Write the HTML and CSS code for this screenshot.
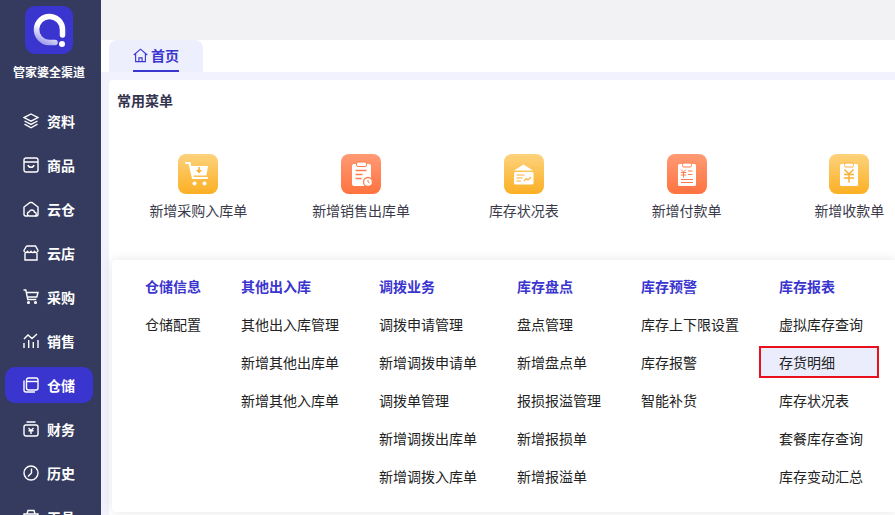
FILE: index.html
```html
<!DOCTYPE html>
<html lang="zh-CN">
<head>
  <meta charset="UTF-8">
  <title>管家婆全渠道</title>
  <link rel="stylesheet" href="styles.css">
</head>
<body>
<div class="app">

  <!-- 左侧导航 -->
  <aside class="sidebar">
    <div class="logo">
      <svg width="48" height="48" viewBox="0 0 48 48">
        <defs>
          <linearGradient id="ring" x1="0.800" y1="0" x2="0.300" y2="1">
            <stop offset="0" stop-color="#ffffff"/>
            <stop offset="0.550" stop-color="#ffffff"/>
            <stop offset="1" stop-color="#a9a6ec"/>
          </linearGradient>
        </defs>
        <path d="M30 36.500H24A13 13 0 1 1 37.500 24V29" fill="none" stroke="url(#ring)" stroke-width="5.500" stroke-linecap="round"/>
        <circle cx="37" cy="38" r="3" fill="#fff"/>
      </svg>
    </div>
    <div class="brand">管家婆全渠道</div>
    <nav class="nav">
      <a class="nav-item">
        <svg class="nav-icon" viewBox="0 0 16 16"><path d="M8 1 15 4.600 8 8.200 1 4.600ZM1.500 8 8 11.400 14.500 8M1.500 11.200 8 14.800l6.500-3.600"/></svg>
        <span>资料</span>
      </a>
      <a class="nav-item">
        <svg class="nav-icon" viewBox="0 0 16 16"><rect x="1" y="1" width="14" height="14" rx="2"/><path d="M1 5h14M5 8c.6 3 5.400 3 6 0"/></svg>
        <span>商品</span>
      </a>
      <a class="nav-item">
        <svg class="nav-icon" viewBox="0 0 16 16"><path d="M5 15H2.500A1.500 1.500 0 0 1 1 13.500V6l6-4.500h2L15 6v7.500a1.500 1.500 0 0 1-1.500 1.500H12"/><path d="M6 15a2.200 2.200 0 0 1 .3-4.300 2.800 2.800 0 0 1 5.300.6A1.900 1.900 0 0 1 12 15Z"/></svg>
        <span>云仓</span>
      </a>
      <a class="nav-item">
        <svg class="nav-icon" viewBox="0 0 16 16"><path d="M3.500 1h9L15 5.500v1M1 6.500v-1L3.500 1M1 6c1.200 2 2.500 2 3.500.5 1 1.500 2.500 1.500 3.500 0 1 1.500 2.500 1.500 3.500 0 1 1.500 2.300 1.500 3.500-.5M2 8v7h12V8"/></svg>
        <span>云店</span>
      </a>
      <a class="nav-item">
        <svg class="nav-icon" viewBox="0 0 16 16"><path d="M0.500 1h2.300l2 9.500h8.500M3.300 3.500h11.700l-1.200 4.500H4.300"/><circle cx="5.500" cy="13.500" r=".9"/><circle cx="12.500" cy="13.500" r=".9"/></svg>
        <span>采购</span>
      </a>
      <a class="nav-item">
        <svg class="nav-icon" viewBox="0 0 16 16"><path d="M1 15V10M5.700 15V7M10.300 15V9M15 15V7M1 6l4-4 4 3.500L14 1"/></svg>
        <span>销售</span>
      </a>
      <a class="nav-item active">
        <svg class="nav-icon" viewBox="0 0 16 16"><path d="M1 3.500V13a2 2 0 0 0 2 2h9"/><rect x="3.500" y="1" width="11.500" height="12" rx="2"/><path d="M3.500 4.500h11.500"/></svg>
        <span>仓储</span>
      </a>
      <a class="nav-item">
        <svg class="nav-icon" viewBox="0 0 16 16"><rect x="1" y="4" width="14" height="11" rx="2"/><path d="M3.500 1h9M5.500 7 8 9.500 10.500 7M5.500 9.800h5M8 9.500V13"/></svg>
        <span>财务</span>
      </a>
      <a class="nav-item">
        <svg class="nav-icon" viewBox="0 0 16 16"><circle cx="8" cy="8" r="7"/><path d="M8.500 3.500V8L5 11.500"/></svg>
        <span>历史</span>
      </a>
      <a class="nav-item">
        <svg class="nav-icon" viewBox="0 0 16 16"><path d="M4 5 5 1.500h6L12 5M1 5h14v9H1ZM1 9h14"/></svg>
        <span>工具</span>
      </a>
    </nav>
  </aside>

  <main class="main">
    <div class="topbar"></div>

    <div class="tabs">
      <div class="tab">
        <svg class="tab-icon" viewBox="0 0 16 16"><path d="M.8 7.500 8 1.200l7.200 6.300M2.800 6V14.500h10.400V6M6.300 14.500V10.500h3.400V14.500"/></svg>
        <span>首页</span>
      </div>
    </div>

    <section class="content">
      <h3 class="section-title">常用菜单</h3>
      <div class="quick-list">
        <div class="quick-item">
          <div class="quick-icon yellow">
            <svg viewBox="0 0 40 40" width="40" height="40">
              <path d="M8 9h3.500l3.500 15h14" fill="none" stroke="#fff" stroke-width="2.200" stroke-linecap="round"/>
              <path d="M12 12h18l-1.500 9.500H14Z" fill="#fff"/>
              <circle cx="16.500" cy="29.500" r="2" fill="#fff"/><circle cx="26.500" cy="29.500" r="2" fill="#fff"/>
              <path d="M21 13v3.500" stroke="#fbb034" stroke-width="1.600"/>
              <path d="M18 16h6l-3 3.500Z" fill="#fbb034"/>
            </svg>
          </div>
          <div class="quick-label">新增采购入库单</div>
        </div>
        <div class="quick-item">
          <div class="quick-icon orange">
            <svg viewBox="0 0 40 40" width="40" height="40">
              <rect x="11" y="10" width="19" height="22" rx="2" fill="#fff"/>
              <rect x="15.500" y="8" width="10" height="4.500" rx="1.500" fill="#fff" stroke="#ff7d4d" stroke-width="1"/>
              <path d="M14.500 16.500h11M14.500 20.500h7M14.500 24.500h6" stroke="#ff7d4d" stroke-width="1.300"/>
              <circle cx="27" cy="28" r="4.500" fill="#fff" stroke="#ff7d4d" stroke-width="1.300"/>
              <path d="M27 26v2l1.500 1" fill="none" stroke="#ff7d4d" stroke-width="1"/>
            </svg>
          </div>
          <div class="quick-label">新增销售出库单</div>
        </div>
        <div class="quick-item">
          <div class="quick-icon yellow">
            <svg viewBox="0 0 40 40" width="40" height="40">
              <path d="M10 16.500 19.500 10.500l9.500 6Z" fill="#fff"/>
              <rect x="10" y="18" width="19.500" height="12.500" rx="1.500" fill="#fff"/>
              <path d="M12.500 21h8M12.500 24h6M12.500 27h4.500M20 27l2.500-2.500 1.500 1.500 3-3" fill="none" stroke="#fbb034" stroke-width="1.100"/>
            </svg>
          </div>
          <div class="quick-label">库存状况表</div>
        </div>
        <div class="quick-item">
          <div class="quick-icon orange">
            <svg viewBox="0 0 40 40" width="40" height="40">
              <rect x="11" y="10" width="18" height="22" rx="1.500" fill="#fff"/>
              <rect x="15.500" y="9" width="9" height="4" rx="1.500" fill="#fff" stroke="#ff7d4d" stroke-width="1"/>
              <path d="M14 15.500 16.500 18 19 15.500M13.800 18.500h5.400M13.800 21h5.400M16.500 18v5.500M21 17h4.500M21 20.500h4.500M14 25.500h12M14 28.500h12" fill="none" stroke="#ff7d4d" stroke-width="1"/>
            </svg>
          </div>
          <div class="quick-label">新增付款单</div>
        </div>
        <div class="quick-item">
          <div class="quick-icon yellow">
            <svg viewBox="0 0 40 40" width="40" height="40">
              <rect x="11" y="10" width="18" height="22" rx="1.500" fill="#fff"/>
              <rect x="15.500" y="9" width="9" height="4" rx="1.500" fill="#fff" stroke="#fbb034" stroke-width="1"/>
              <path d="M15.500 15.500 20 20l4.500-4.500M15 20.500h10M15 24h10M20 20v8.500" fill="none" stroke="#fbb034" stroke-width="1.500"/>
            </svg>
          </div>
          <div class="quick-label">新增收款单</div>
        </div>
      </div>
    </section>

    <!-- 仓储 弹出菜单 -->
    <div class="flyout">
      <div class="fly-col">
        <div class="fly-title">仓储信息</div>
        <div class="fly-link">仓储配置</div>
      </div>
      <div class="fly-col">
        <div class="fly-title">其他出入库</div>
        <div class="fly-link">其他出入库管理</div>
        <div class="fly-link">新增其他出库单</div>
        <div class="fly-link">新增其他入库单</div>
      </div>
      <div class="fly-col">
        <div class="fly-title">调拨业务</div>
        <div class="fly-link">调拨申请管理</div>
        <div class="fly-link">新增调拨申请单</div>
        <div class="fly-link">调拨单管理</div>
        <div class="fly-link">新增调拨出库单</div>
        <div class="fly-link">新增调拨入库单</div>
      </div>
      <div class="fly-col">
        <div class="fly-title">库存盘点</div>
        <div class="fly-link">盘点管理</div>
        <div class="fly-link">新增盘点单</div>
        <div class="fly-link">报损报溢管理</div>
        <div class="fly-link">新增报损单</div>
        <div class="fly-link">新增报溢单</div>
      </div>
      <div class="fly-col">
        <div class="fly-title">库存预警</div>
        <div class="fly-link">库存上下限设置</div>
        <div class="fly-link">库存报警</div>
        <div class="fly-link">智能补货</div>
      </div>
      <div class="fly-col">
        <div class="fly-title">库存报表</div>
        <div class="fly-link">虚拟库存查询</div>
        <div class="fly-link selected">存货明细</div>
        <div class="fly-link">库存状况表</div>
        <div class="fly-link">套餐库存查询</div>
        <div class="fly-link">库存变动汇总</div>
      </div>
    </div>
  </main>
</div>
</body>
</html>
```

FILE: styles.css
```css
body {
  margin: 0;
  font-family: "Noto Sans CJK SC", "Liberation Sans", sans-serif;
  color: #333;
  overflow: hidden;
}

.app {
  display: flex;
  width: 895px;
  height: 515px;
  overflow: hidden;
}

/* === 左侧导航 === */
.sidebar {
  width: 101px;
  flex-shrink: 0;
  background: #353b5e;
  display: flex;
  flex-direction: column;
  align-items: center;
  padding-top: 6px;
  box-sizing: border-box;
}

.logo {
  width: 48px;
  height: 48px;
  border-radius: 10px;
  background: #3b35cf;
  margin-right: 3px;
}

.brand {
  margin: 9px 3px 0 0;
  height: 18px;
  line-height: 18px;
  font-size: 12px;
  font-weight: 700;
  color: #fff;
}

.nav {
  margin-top: 22px;
  width: 100%;
}

.nav-item {
  display: flex;
  align-items: center;
  gap: 8px;
  width: 88px;
  height: 36px;
  margin: 0 0 8px 5px;
  padding-left: 18px;
  box-sizing: border-box;
  border-radius: 10px;
  font-size: 14px;
  font-weight: 700;
  color: #fff;
}

.nav-item.active {
  background: #3b35cf;
}

.nav-icon {
  width: 16px;
  height: 16px;
  fill: none;
  stroke: #fff;
  stroke-width: 1.400;
}

/* === 顶部 === */
.main {
  position: relative;
  flex: 1;
  background: #f1f2fe;
}

.topbar {
  height: 40px;
  background: #f2f2f5;
}

.tabs {
  height: 32px;
  padding-left: 8px;
  background: #fff;
}

.tab {
  display: flex;
  align-items: center;
  gap: 4px;
  width: 94px;
  height: 32px;
  padding: 0 0 2px 24px;
  box-sizing: border-box;
  border-radius: 8px 8px 0 0;
  background: #eeeffd;
  color: #3b35cf;
  font-size: 14px;
  font-weight: 700;
  position: relative;
}

.tab span {
  margin-left: -1px;
}

.tab::after {
  content: '';
  position: absolute;
  left: 24px;
  bottom: 0;
  width: 46px;
  height: 2px;
  background: #3b35cf;
}

.tab-icon {
  width: 15px;
  height: 15px;
  fill: none;
  stroke: #3b35cf;
  stroke-width: 1.200;
}

/* === 常用菜单 === */
.content {
  margin: 8px 0 0 8px;
  height: 435px;
  background: #fff;
  border-radius: 4px 0 0 0;
  padding-top: 10px;
  box-sizing: border-box;
}

.section-title {
  margin: 0 0 0 8px;
  font-size: 14px;
  line-height: 20px;
  font-weight: 700;
  color: #33334d;
}

.quick-list {
  display: flex;
  margin-top: 44px;
  margin-left: 8px;
}

.quick-item {
  width: 162.750px;
  flex-shrink: 0;
  display: flex;
  flex-direction: column;
  align-items: center;
}

.quick-icon {
  width: 40px;
  height: 40px;
  border-radius: 8px;
}

.quick-icon.yellow {
  background: linear-gradient(180deg, #fdd27c, #fbb024);
}

.quick-icon.orange {
  background: linear-gradient(180deg, #ff9a74, #ff7340);
}

.quick-label {
  margin-top: 6px;
  font-size: 14px;
  line-height: 20px;
  color: #3a3a4a;
  white-space: nowrap;
}

/* === 弹出菜单 === */
.flyout {
  position: absolute;
  left: 11px;
  top: 260px;
  width: 784px;
  height: 252px;
  box-sizing: border-box;
  padding: 7px 0 0 33px;
  display: flex;
  gap: 40px;
  background: #fff;
  border-radius: 4px 0 0 4px;
  box-shadow: 0 0 12px rgba(0, 0, 0, 0.1);
}

.fly-title,
.fly-link {
  height: 38px;
  line-height: 38px;
  font-size: 14px;
  white-space: nowrap;
}

.fly-title {
  font-weight: 700;
  color: #3b35cf;
}

.fly-link {
  color: #222;
}

.fly-link.selected {
  width: 120px;
  height: 32px;
  line-height: 28px;
  margin: 3px 0 3px -20px;
  padding-left: 18px;
  box-sizing: border-box;
  background: #ebedfc;
  border: 2px solid #e8101c;
}
```
